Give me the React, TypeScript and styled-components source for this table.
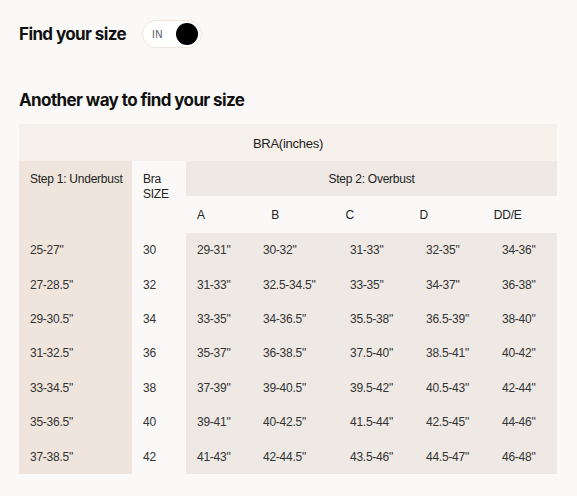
import React from "react";
import styled, { createGlobalStyle } from "styled-components";

const Global = createGlobalStyle`
  html, body { margin: 0; padding: 0; background: #faf9f7; }
  body { font-family: "Liberation Sans", Arial, sans-serif; color: #333; }
`;

const Page = styled.div`
  padding: 20px 20px 0 19px;
  width: 538px;
`;

const TitleRow = styled.div`
  display: flex;
  align-items: center;
  gap: 16px;
  height: 28px;
`;

const Heading = styled.h2`
  margin: 0;
  font-family: Inter, "Liberation Sans", sans-serif;
  font-weight: 700;
  font-size: 17px;
  letter-spacing: -0.6px;
  color: #111;
`;

const Toggle = styled.div`
  box-sizing: border-box;
  width: 60px;
  height: 28px;
  border: 1px solid #f1e6dc;
  border-radius: 14px;
  background: #fff;
  display: flex;
  align-items: center;
  justify-content: space-between;
  padding: 0 3px 0 9px;
`;

const ToggleLabel = styled.span`
  font-size: 10px;
  color: #555;
  letter-spacing: 0.3px;
`;

const Knob = styled.span`
  width: 22px;
  height: 22px;
  border-radius: 50%;
  background: #000;
`;

const SubHeading = styled(Heading)`
  margin-top: 41px;
  margin-bottom: 13px;
  line-height: 22px;
`;

const Table = styled.div`
  display: grid;
  grid-template-columns: 113px 54px 66px 87px 76px 76px 66px;
  grid-template-rows: 37px 35px 37px;
  grid-auto-rows: 34.43px;
  font-size: 12px;
  letter-spacing: -0.25px;
  color: #333;
`;

const Caption = styled.div`
  grid-column: 1 / -1;
  background: #f5f0ea;
  display: flex;
  align-items: center;
  justify-content: center;
  font-size: 13px;
  color: #1c1c1c;
  padding-top: 1px;
`;

const Cell = styled.div<{ $bg?: string }>`
  background: ${(p) => p.$bg || "transparent"};
  display: flex;
  align-items: center;
  padding-left: 11px;
  white-space: nowrap;
`;

const StepOne = styled.div`
  grid-column: 1;
  grid-row: 2 / 4;
  background: #efe5dc;
  padding: 11px 0 0 11px;
  line-height: 14px;
  color: #222;
`;

const BraSize = styled.div`
  grid-column: 2;
  grid-row: 2 / 4;
  padding: 11px 0 0 11px;
  line-height: 14.5px;
  color: #222;
`;

const StepTwo = styled.div`
  grid-column: 3 / -1;
  grid-row: 2;
  background: #eee9e4;
  display: flex;
  align-items: center;
  justify-content: center;
  color: #222;
`;

const Letters = styled.div`
  grid-column: 3 / -1;
  grid-row: 3;
  display: grid;
  grid-template-columns: repeat(5, 1fr);
`;

const Letter = styled.div`
  display: flex;
  align-items: center;
  padding-left: 11px;
  color: #222;
`;

const rows = [
  ["25-27\"", "30", "29-31\"", "30-32\"", "31-33\"", "32-35\"", "34-36\""],
  ["27-28.5\"", "32", "31-33\"", "32.5-34.5\"", "33-35\"", "34-37\"", "36-38\""],
  ["29-30.5\"", "34", "33-35\"", "34-36.5\"", "35.5-38\"", "36.5-39\"", "38-40\""],
  ["31-32.5\"", "36", "35-37\"", "36-38.5\"", "37.5-40\"", "38.5-41\"", "40-42\""],
  ["33-34.5\"", "38", "37-39\"", "39-40.5\"", "39.5-42\"", "40.5-43\"", "42-44\""],
  ["35-36.5\"", "40", "39-41\"", "40-42.5\"", "41.5-44\"", "42.5-45\"", "44-46\""],
  ["37-38.5\"", "42", "41-43\"", "42-44.5\"", "43.5-46\"", "44.5-47\"", "46-48\""],
];

const bgFor = (i: number) => (i === 0 ? "#efe5dc" : i === 1 ? undefined : "#eee9e4");

export default function App() {
  return (
    <Page>
      <Global />
      <TitleRow>
        <Heading>Find your size</Heading>
        <Toggle>
          <ToggleLabel>IN</ToggleLabel>
          <Knob />
        </Toggle>
      </TitleRow>
      <SubHeading>Another way to find your size</SubHeading>
      <Table>
        <Caption>BRA(inches)</Caption>
        <StepOne>Step 1: Underbust</StepOne>
        <BraSize>
          Bra
          <br />
          SIZE
        </BraSize>
        <StepTwo>Step 2: Overbust</StepTwo>
        <Letters>
          {["A", "B", "C", "D", "DD/E"].map((l) => (
            <Letter key={l}>{l}</Letter>
          ))}
        </Letters>
        {rows.map((r, ri) =>
          r.map((v, ci) => (
            <Cell key={`${ri}-${ci}`} $bg={bgFor(ci)}>
              {v}
            </Cell>
          ))
        )}
      </Table>
    </Page>
  );
}
